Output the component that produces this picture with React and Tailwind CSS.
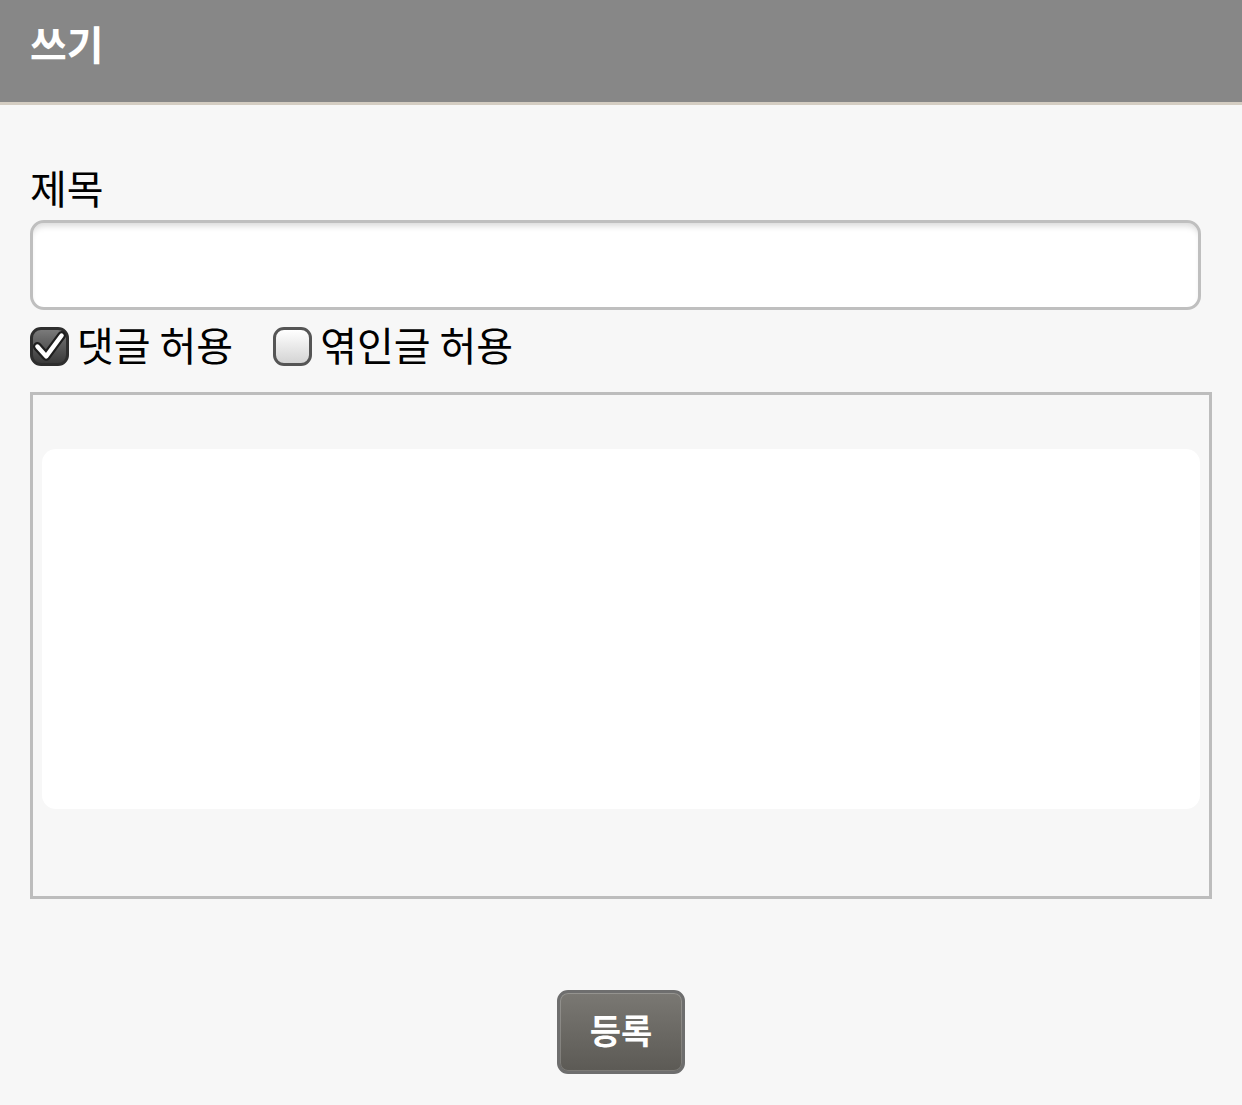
import React from "react";

const font = { fontFamily: '"Noto Sans CJK KR", "Noto Sans", sans-serif' };

function CheckBox({ checked }) {
  if (checked) {
    return (
      <span className="flex h-[39px] w-[39px] items-center justify-center rounded-[11px] border-[3px] border-[#2e2e2e] bg-gradient-to-b from-[#7a7a7a] to-[#3a3a3a]">
        <svg width="33" height="33" viewBox="0 0 30 30">
          <path d="M4 15 L12 24 L26 5" fill="none" stroke="#1e1e1e" strokeWidth="8" strokeLinecap="round" strokeLinejoin="round" />
          <path d="M4 15 L12 24 L26 5" fill="none" stroke="#fff" strokeWidth="4" strokeLinecap="round" strokeLinejoin="round" />
        </svg>
      </span>
    );
  }
  return (
    <span className="block h-[39px] w-[39px] rounded-[11px] border-[3px] border-[#555] bg-gradient-to-b from-[#ffffff] to-[#d4d4d4]" />
  );
}

export default function App() {
  return (
    <div className="min-h-[1105px] bg-[#f7f7f7]" style={font}>
      <div className="h-[105px] border-b-[3px] border-[#d4cdc2] bg-[#878787] px-[30px] pt-[17px]">
        <h1 className="text-[40px] font-bold leading-[52px] text-white">쓰기</h1>
      </div>
      <div className="px-[30px] pt-[54px]">
        <label className="block text-[40px] leading-[56px] text-black">제목</label>
        <input
          className="mt-[5px] block h-[90px] w-[1171px] rounded-[14px] border-[3px] border-[#bfbfbf] bg-white shadow-[inset_0_6px_6px_-3px_rgba(0,0,0,0.15)] outline-none"
          type="text"
        />
        <div className="mt-[16px] flex items-center text-[40px] leading-[44px] text-black">
          <label className="flex items-center gap-[8px]">
            <CheckBox checked />
            <span className="-mt-[4px]">댓글 허용</span>
          </label>
          <label className="ml-[40px] flex items-center gap-[8px]">
            <CheckBox />
            <span className="-mt-[4px]">엮인글 허용</span>
          </label>
        </div>
        <div className="mt-[26px] h-[507px] w-[1182px] border-[3px] border-[#bdbdbd] px-[9px] pt-[54px]">
          <div className="h-[360px] rounded-[14px] bg-white" />
        </div>
        <div className="mt-[91px] flex justify-center">
          <button className="h-[84px] w-[128px] rounded-[11px] border-[3px] border-[#6e6e6e] bg-gradient-to-b from-[#7a7873] to-[#5c5a55] pb-[6px] text-[34px] font-bold text-white shadow-[inset_0_0_0_1px_rgba(255,255,255,0.2)]">
            등록
          </button>
        </div>
      </div>
    </div>
  );
}
